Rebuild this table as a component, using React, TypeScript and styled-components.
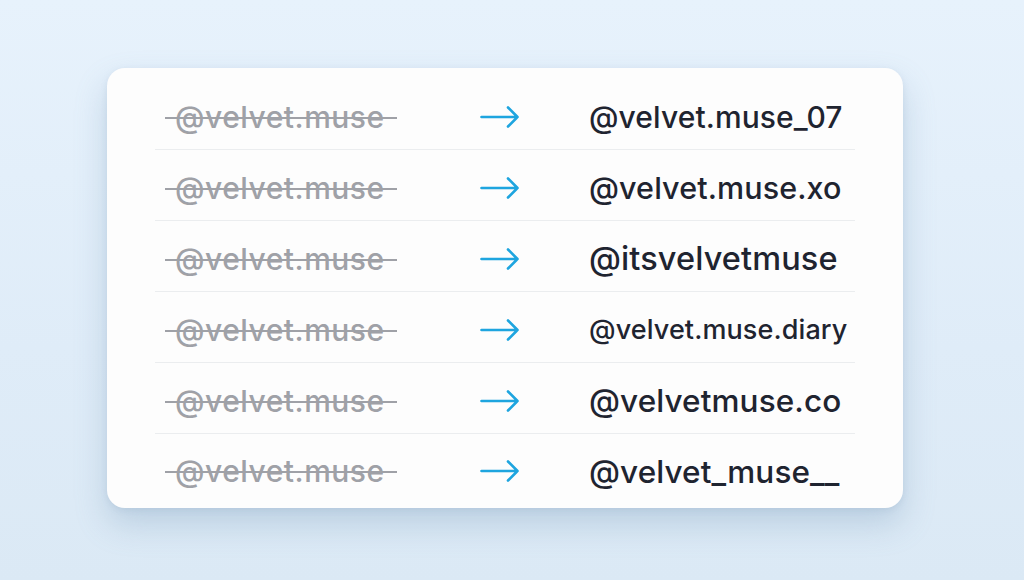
import { createGlobalStyle } from "styled-components";
import styled from "styled-components";

const GlobalStyle = createGlobalStyle`
  html, body {
    margin: 0;
    padding: 0;
  }
  body {
    font-family: Inter, "Noto Sans", sans-serif;
    background: linear-gradient(180deg, #e7f2fc 0%, #dfecf8 60%, #dbe9f5 100%);
    min-height: 100vh;
  }
`;

// the new handles don't share one size in the mockup, so each keeps its own
const renames = [
  { name: "@velvet.muse_07", size: 30 },
  { name: "@velvet.muse.xo", size: 30.5 },
  { name: "@itsvelvetmuse", size: 32.5 },
  { name: "@velvet.muse.diary", size: 27 },
  { name: "@velvetmuse.co", size: 31.5 },
  { name: "@velvet_muse__", size: 31.5 },
];

function App() {
  return (
    <>
      <GlobalStyle />
      <Page>
        <Card>
          {renames.map((r, i) => (
            <Row key={r.name} $last={i === renames.length - 1}>
              <OldName>
                <Struck>@velvet.muse</Struck>
              </OldName>
              <Arrow viewBox="0 0 40 24" aria-hidden>
                <path
                  d="M1.5 12 H37.5 M28 2.5 L37.5 12 L28 21.5"
                  fill="none"
                  stroke="#1ea5df"
                  strokeWidth="2.6"
                  strokeLinecap="round"
                  strokeLinejoin="round"
                />
              </Arrow>
              <NewName $size={r.size}>{r.name}</NewName>
            </Row>
          ))}
        </Card>
      </Page>
    </>
  );
}

export default App;

const Page = styled.div`
  width: 1024px;
  height: 580px;
  box-sizing: border-box;
  padding: 68px 0 0 107px;
`;

const Card = styled.div`
  width: 796px;
  height: 440px;
  box-sizing: border-box;
  padding: 11px 48px 5px;
  background: #fdfdfd;
  border-radius: 18px;
  box-shadow: 0 16px 32px rgba(110, 145, 180, 0.3),
    0 2px 6px rgba(120, 150, 180, 0.15);
  display: flex;
  flex-direction: column;
`;

const Row = styled.div<{ $last?: boolean }>`
  display: grid;
  grid-template-columns: 326px 108px 1fr;
  align-items: center;
  height: ${(p) => (p.$last ? "69px" : "71px")};
  box-sizing: border-box;
  padding-top: 5px;
  border-bottom: ${(p) => (p.$last ? "none" : "1px solid #ebedef")};
`;

const OldName = styled.div`
  padding-left: 20px;
`;

const Struck = styled.span`
  position: relative;
  display: inline-block;
  font-size: 30px;
  font-weight: 500;
  color: #9fa1a7;
  letter-spacing: 0.5px;

  &::after {
    content: "";
    position: absolute;
    left: -10px;
    right: -12px;
    top: 51%;
    height: 2px;
    background: #9fa1a7;
  }
`;

const Arrow = styled.svg`
  width: 40px;
  height: 24px;
  margin-left: -1px;
`;

const NewName = styled.div<{ $size: number }>`
  font-size: ${(p) => p.$size}px;
  font-weight: 500;
  color: #1f2430;
  letter-spacing: 0.1px;
`;
